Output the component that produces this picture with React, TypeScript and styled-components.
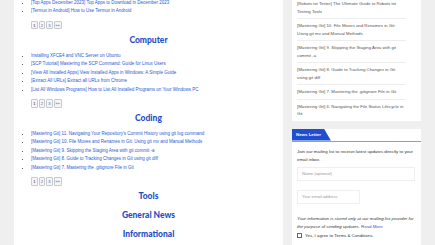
import React from "react";
import styled, { createGlobalStyle } from "styled-components";

const Global = createGlobalStyle`
  html, body { margin: 0; padding: 0; background: #efefef; overflow: hidden; }
  body { font-family: "Liberation Sans", Arial, sans-serif; }
`;

const Layout = styled.div`
  display: flex;
  align-items: flex-start;
  margin-top: -10px;
  padding-left: 14px;
  width: 435px;
  box-sizing: border-box;
`;

const Main = styled.main`
  width: 269px;
  background: #fff;
  padding: 8.75px 0 40px 0;
  box-sizing: border-box;
`;

const Section = styled.section`
  display: flex;
  flex-direction: column;
  padding-bottom: 2.25px;
`;

const Heading = styled.h2`
  margin: 0;
  text-align: center;
  font-family: "Lato", "Open Sans", sans-serif;
  font-weight: 900;
  font-size: 8.5px;
  line-height: 16.5px;
  color: #1f4fc4;
`;

const List = styled.ul<{ $first?: boolean }>`
  margin: ${(p) => (p.$first ? "0" : "3.5px")} 0 0 0;
  padding: 0 0 0 17px;
  list-style: disc;
  font-size: 4.5px;
  line-height: 8.5px;
  color: #222;
`;

const Item = styled.li`
  color: #333;
  & a { color: #2c5ad4; text-decoration: none; }
`;

const Pager = styled.nav`
  display: flex;
  gap: 1px;
  margin: 5px 0 0 17px;
`;

const PageBox = styled.span<{ $current?: boolean; $wide?: boolean }>`
  display: flex;
  align-items: center;
  justify-content: center;
  width: ${(p) => (p.$wide ? "8px" : "6.5px")};
  height: 8.5px;
  box-sizing: border-box;
  border: 1px solid #c9c9c9;
  border-radius: 1px;
  background: #f6f6f6;
  font-size: 4px;
  color: ${(p) => (p.$current ? "#222" : "#2c5ad4")};
`;

const Aside = styled.aside`
  display: flex;
  flex-direction: column;
  gap: 8px;
  margin-left: 9px;
  width: 129px;
`;

const Card = styled.div`
  background: #fff;
  padding: 7px 15px 0 5px;
`;

const PostLink = styled.div`
  font-size: 4.35px;
  line-height: 7.5px;
  color: #555;
  padding: 3px 0;
  border-bottom: 1px solid #ededed;
  &:last-child { border-bottom: none; }
`;

const NewsCard = styled.div`
  background: #fff;
  padding-bottom: 10px;
`;

const TabBar = styled.div`
  display: flex;
  height: 12px;
  border-bottom: 1px solid #7f9fe0;
`;

const Tab = styled.div`
  display: flex;
  align-items: center;
  padding: 0 10px 0 4px;
  background: #1d4fd0;
  color: #fff;
  font-weight: 700;
  font-size: 4.4px;
  clip-path: polygon(0 0, 82% 0, 100% 100%, 0 100%);
`;

const NewsBody = styled.div`
  display: flex;
  flex-direction: column;
  padding: 6px 6px 0 5px;
  font-size: 4.4px;
  color: #333;
`;

const Intro = styled.p`
  margin: 0;
  line-height: 8px;
`;

const Input = styled.div<{ $w: number }>`
  width: ${(p) => p.$w}px;
  height: 14px;
  box-sizing: border-box;
  border: 1px solid #efefef;
  display: flex;
  align-items: center;
  padding-left: 4px;
  color: #999;
  font-size: 4.2px;
`;

const Note = styled.p`
  margin: 11px 0 0 0;
  font-style: italic;
  line-height: 8.5px;
  & a { color: #2c5ad4; font-style: normal; text-decoration: none; }
`;

const Check = styled.label`
  display: flex;
  align-items: center;
  gap: 3px;
  line-height: 8px;
`;

const Box = styled.span`
  width: 3px;
  height: 3px;
  border: 0.6px solid #666;
  border-radius: 0.5px;
`;

const topItems = [
  "[Top Apps December 2023] Top Apps to Download in December 2023",
  "[Termux in Android] How to Use Termux in Android",
];

const sections: { title: string; items: string[] }[] = [
  {
    title: "Computer",
    items: [
      "Installing XFCE4 and VNC Server on Ubuntu",
      "[SCP Tutorial] Mastering the SCP Command: Guide for Linux Users",
      "[View All Installed Apps] View Installed Apps in Windows: A Simple Guide",
      "[Extract All URLs] Extract all URLs from Chrome",
      "[List All Windows Programs] How to List All Installed Programs on Your Windows PC",
    ],
  },
  {
    title: "Coding",
    items: [
      "[Mastering Git] 11. Navigating Your Repository's Commit History using git log command",
      "[Mastering Git] 10. File Moves and Renames in Git: Using git mv and Manual Methods",
      "[Mastering Git] 9. Skipping the Staging Area with git commit -a",
      "[Mastering Git] 8. Guide to Tracking Changes in Git using git diff",
      "[Mastering Git] 7. Mastering the .gitignore File in Git",
    ],
  },
  { title: "Tools", items: [] },
  { title: "General News", items: [] },
  { title: "Informational", items: [] },
  { title: "Downloads", items: [] },
];

const recent = [
  "[Robots.txt Tester] The Ultimate Guide to Robots.txt Testing Tools",
  "[Mastering Git] 10. File Moves and Renames in Git: Using git mv and Manual Methods",
  "[Mastering Git] 9. Skipping the Staging Area with git commit -a",
  "[Mastering Git] 8. Guide to Tracking Changes in Git using git diff",
  "[Mastering Git] 7. Mastering the .gitignore File in Git",
  "[Mastering Git] 6. Navigating the File Status Lifecycle in Git",
];

function Pagination() {
  return (
    <Pager>
      <PageBox $current>1</PageBox>
      <PageBox>2</PageBox>
      <PageBox>3</PageBox>
      <PageBox $wide>»»</PageBox>
    </Pager>
  );
}

export default function App() {
  return (
    <>
      <Global />
      <Layout>
        <Main>
          <Section>
            <List $first>
              {topItems.map((t) => (
                <Item key={t}><a href="#">{t}</a></Item>
              ))}
            </List>
            <Pagination />
          </Section>
          {sections.map((s) => (
            <Section key={s.title}>
              <Heading>{s.title}</Heading>
              {s.items.length > 0 && (
                <>
                  <List>
                    {s.items.map((t) => (
                      <Item key={t}><a href="#">{t}</a></Item>
                    ))}
                  </List>
                  <Pagination />
                </>
              )}
            </Section>
          ))}
        </Main>
        <Aside>
          <Card>
            {recent.map((r) => (
              <PostLink key={r}>{r}</PostLink>
            ))}
          </Card>
          <NewsCard>
            <TabBar>
              <Tab>News Letter</Tab>
            </TabBar>
            <NewsBody>
              <Intro>Join our mailing list to receive latest updates directly to your email inbox.</Intro>
              <Input $w={118} style={{ marginTop: "3px" }}>Name (optional)</Input>
              <Input $w={63} style={{ marginTop: "9px" }}>Your email address</Input>
              <Note>
                Your information is stored only at our mailing list provider for the purpose of sending updates. <a href="#">Read More</a>
              </Note>
              <Check>
                <Box />
                Yes, I agree to Terms &amp; Conditions.
              </Check>
            </NewsBody>
          </NewsCard>
        </Aside>
      </Layout>
    </>
  );
}
